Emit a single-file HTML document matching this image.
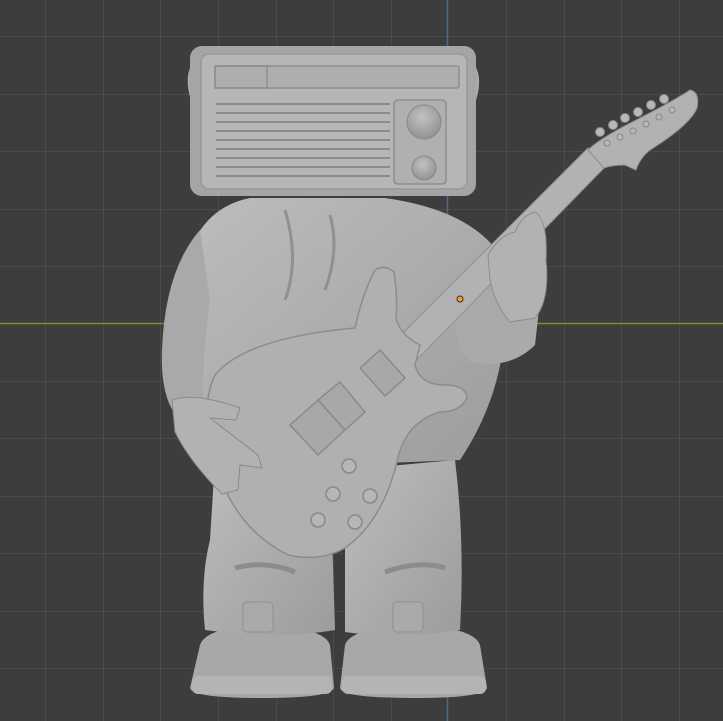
<!DOCTYPE html>
<html><head><meta charset="utf-8"><style>
html,body{margin:0;padding:0;background:#3d3d3d;width:723px;height:721px;overflow:hidden}
svg{display:block}
</style></head><body>
<svg width="723" height="721" viewBox="0 0 723 721" xmlns="http://www.w3.org/2000/svg">
<defs>
<linearGradient id="g" x1="0" y1="0" x2="1" y2="1"><stop offset="0" stop-color="#bdbdbd"/><stop offset="1" stop-color="#9c9c9c"/></linearGradient>
<radialGradient id="rb" cx="0.45" cy="0.35" r="0.7"><stop offset="0" stop-color="#c2c2c2"/><stop offset="1" stop-color="#8f8f8f"/></radialGradient>
</defs>
<rect width="723" height="721" fill="#3d3d3d"/>
<g stroke="#4b4b4b" stroke-width="1">
<line x1="45.5" y1="0" x2="45.5" y2="721"/><line x1="103.5" y1="0" x2="103.5" y2="721"/><line x1="160.5" y1="0" x2="160.5" y2="721"/><line x1="218.5" y1="0" x2="218.5" y2="721"/><line x1="276.5" y1="0" x2="276.5" y2="721"/><line x1="333.5" y1="0" x2="333.5" y2="721"/><line x1="391.5" y1="0" x2="391.5" y2="721"/><line x1="506.5" y1="0" x2="506.5" y2="721"/><line x1="564.5" y1="0" x2="564.5" y2="721"/><line x1="621.5" y1="0" x2="621.5" y2="721"/><line x1="679.5" y1="0" x2="679.5" y2="721"/>
<line x1="0" y1="36.5" x2="723" y2="36.5"/><line x1="0" y1="94.5" x2="723" y2="94.5"/><line x1="0" y1="151.5" x2="723" y2="151.5"/><line x1="0" y1="209.5" x2="723" y2="209.5"/><line x1="0" y1="266.5" x2="723" y2="266.5"/><line x1="0" y1="381.5" x2="723" y2="381.5"/><line x1="0" y1="438.5" x2="723" y2="438.5"/><line x1="0" y1="496.5" x2="723" y2="496.5"/><line x1="0" y1="553.5" x2="723" y2="553.5"/><line x1="0" y1="611.5" x2="723" y2="611.5"/><line x1="0" y1="668.5" x2="723" y2="668.5"/>
</g>
<line x1="447.5" y1="0" x2="447.5" y2="721" stroke="#4a6a9a" stroke-width="1.5"/>
<line x1="0" y1="323.5" x2="723" y2="323.5" stroke="#7a8f30" stroke-width="1.5"/>

<!-- shoes -->
<path d="M200 645 Q205 628 262 624 Q325 628 330 645 L334 688 Q330 698 262 698 Q192 698 190 688 Z" fill="#a8a8a8"/>
<path d="M345 645 Q350 628 412 624 Q475 628 480 645 L487 688 Q484 698 414 698 Q342 698 340 688 Z" fill="#a8a8a8"/>
<rect x="192" y="676" width="140" height="18" rx="6" fill="#b4b4b4"/>
<rect x="342" y="676" width="144" height="18" rx="6" fill="#b4b4b4"/>
<!-- legs -->
<path d="M215 460 L330 470 L335 630 Q280 640 205 630 Q200 580 210 540 Z" fill="url(#g)"/>
<path d="M345 470 L455 460 Q465 540 460 630 Q400 640 345 632 Z" fill="url(#g)"/>
<path d="M235 568 Q265 560 295 572" stroke="#8c8c8c" stroke-width="5" fill="none"/>
<path d="M385 572 Q420 560 445 568" stroke="#8c8c8c" stroke-width="5" fill="none"/>
<rect x="243" y="602" width="30" height="30" rx="4" fill="#aaa" stroke="#909090"/>
<rect x="393" y="602" width="30" height="30" rx="4" fill="#aaa" stroke="#909090"/>
<!-- torso -->
<path d="M250 198 L385 198 Q470 210 500 255 L505 330 Q500 400 460 460 L220 470 Q180 430 185 380 L185 265 Q200 208 250 198 Z" fill="url(#g)"/>
<path d="M200 230 Q165 270 162 350 Q160 400 180 420 L205 425 Q200 370 210 300 Z" fill="#a9a9a9"/>
<path d="M285 210 Q300 260 285 300 M330 215 Q340 250 325 290" stroke="#909090" stroke-width="3" fill="none"/>
<!-- right arm / sleeve -->
<path d="M470 285 Q505 300 540 300 L535 345 Q510 370 470 362 Q450 340 460 300 Z" fill="#aaaaaa"/>
<!-- guitar neck -->
<path d="M388 348 L588 148 L606 166 L405 372 Z" fill="#b2b2b2" stroke="#8e8e8e" stroke-width="1"/>
<!-- headstock -->
<path d="M588 150 Q600 138 640 118 Q675 100 690 90 Q700 92 697 108 Q690 125 650 150 Q640 158 636 170 L625 165 Q612 165 604 168 Z" fill="#b2b2b2" stroke="#8e8e8e" stroke-width="1"/>
<g fill="#b8b8b8" stroke="#888" stroke-width="1">
<circle cx="600" cy="132" r="4.5"/><circle cx="613" cy="125" r="4.5"/><circle cx="625" cy="118" r="4.5"/><circle cx="638" cy="112" r="4.5"/><circle cx="651" cy="105" r="4.5"/><circle cx="664" cy="99" r="4.5"/>
<circle cx="607" cy="143" r="3"/><circle cx="620" cy="137" r="3"/><circle cx="633" cy="131" r="3"/><circle cx="646" cy="124" r="3"/><circle cx="659" cy="117" r="3"/><circle cx="672" cy="110" r="3"/>
</g>
<!-- guitar body -->
<path d="M215 375 Q245 338 355 328 Q362 295 375 270 Q385 264 394 272 Q398 300 396 318 Q400 335 420 345 L415 365 Q420 385 445 385 Q466 385 467 398 Q460 412 440 412 Q405 422 397 462 Q382 522 345 548 Q320 562 288 555 Q242 532 222 482 Q202 430 208 398 Q210 385 215 375 Z" fill="#b0b0b0" stroke="#8c8c8c" stroke-width="1.5"/>
<g fill="#a8a8a8" stroke="#8a8a8a" stroke-width="1.5">
<path d="M290 425 L318 400 L345 430 L318 455 Z"/>
<path d="M318 400 L340 382 L365 412 L345 430 Z"/>
<path d="M360 368 L380 350 L405 378 L385 396 Z"/>
</g>
<g fill="#b6b6b6" stroke="#888" stroke-width="1.5">
<circle cx="349" cy="466" r="7"/><circle cx="333" cy="494" r="7"/><circle cx="370" cy="496" r="7"/><circle cx="318" cy="520" r="7"/><circle cx="355" cy="522" r="7"/>
</g>
<!-- left hand -->
<path d="M172 400 Q195 392 240 408 L236 420 L210 418 L258 455 L262 468 L240 465 L238 490 L222 494 Q190 462 175 432 Z" fill="#b2b2b2" stroke="#8a8a8a" stroke-width="1"/>
<!-- right hand fingers -->
<path d="M488 255 Q500 235 515 232 Q522 215 535 212 Q548 220 546 260 Q550 300 535 318 L510 322 Q495 305 490 280 Z" fill="#b2b2b2" stroke="#8c8c8c" stroke-width="1"/>
<circle cx="460" cy="299" r="3" fill="#f0a020" stroke="#333" stroke-width="1"/>
<!-- radio -->
<path d="M196 62 Q185 75 193 100" stroke="#aaa" stroke-width="4" fill="none"/>
<path d="M470 62 Q482 75 474 100" stroke="#aaa" stroke-width="4" fill="none"/>
<rect x="190" y="46" width="286" height="150" rx="12" fill="#a5a5a5"/>
<rect x="201" y="54" width="266" height="135" rx="8" fill="#b6b6b6" stroke="#999" stroke-width="1.5"/>
<rect x="215" y="66" width="244" height="22" rx="2" fill="#aeaeae" stroke="#8e8e8e" stroke-width="1.5"/>
<rect x="215" y="66" width="52" height="22" fill="none" stroke="#8e8e8e" stroke-width="1.5"/>
<g stroke="#8c8c8c" stroke-width="2">
<line x1="216" y1="104" x2="390" y2="104"/><line x1="216" y1="113" x2="390" y2="113"/><line x1="216" y1="122" x2="390" y2="122"/><line x1="216" y1="131" x2="390" y2="131"/><line x1="216" y1="140" x2="390" y2="140"/><line x1="216" y1="149" x2="390" y2="149"/><line x1="216" y1="158" x2="390" y2="158"/><line x1="216" y1="167" x2="390" y2="167"/><line x1="216" y1="176" x2="390" y2="176"/>
</g>
<rect x="394" y="100" width="52" height="84" rx="4" fill="#b0b0b0" stroke="#8e8e8e" stroke-width="1.5"/>
<circle cx="424" cy="122" r="17" fill="url(#rb)" stroke="#888"/>
<circle cx="424" cy="168" r="12" fill="url(#rb)" stroke="#888"/>
</svg>
</body></html>
